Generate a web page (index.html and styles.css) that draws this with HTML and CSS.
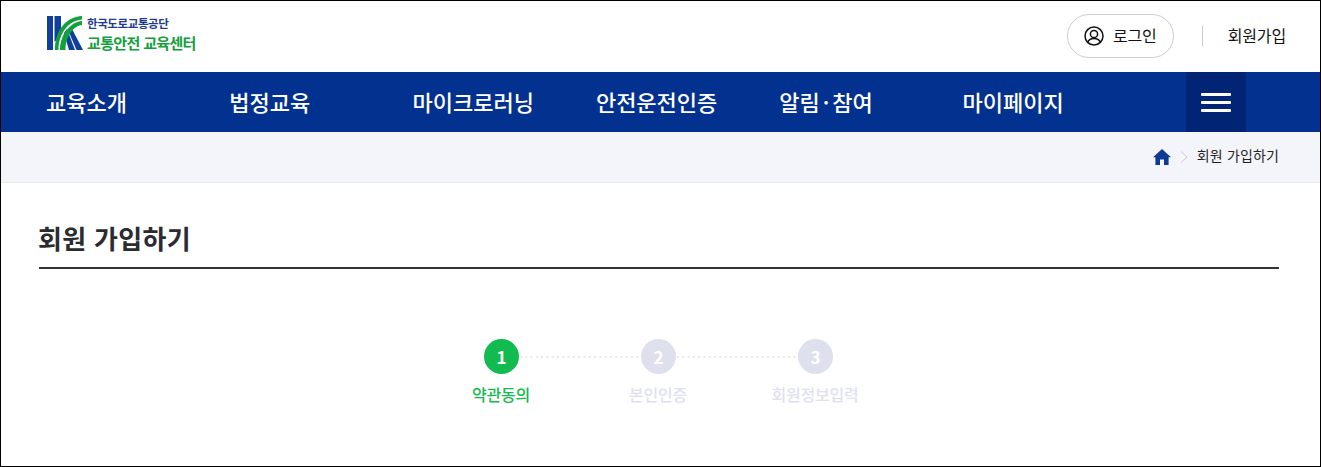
FILE: index.html
```html
<!DOCTYPE html>
<html lang="ko">
<head>
<meta charset="utf-8">
<title>회원 가입하기</title>
<link rel="stylesheet" href="styles.css">
</head>
<body>
<div class="page">
  <header class="top">
    <a class="logo">
      <svg class="logo-mark" width="36" height="35" viewBox="0 0 36 35">
        <path d="M0 0 L6 0 L6 34 L0 34 Z" fill="#0f3f9b"/>
        <path d="M7.5 0 L14 0 L14 20 L7.5 26 Z" fill="#0f3f9b"/>
        <path d="M17 17 L20 13 L28 34 L22 34 Z" fill="#0f3f9b"/>
        <path d="M21 14 L24 11 L36 34 L29.5 34 Z" fill="#0f3f9b"/>
        <path d="M8 34 C8 14 19 1 35 0 L35 3.5 C22 4.5 11.5 17 11.5 34 Z" fill="#12a03c"/>
        <path d="M13 34 C13 19 23 6 35 5 L35 9 C26 10 18.5 21 18.5 34 Z" fill="#12a03c"/>
      </svg>
      <span class="logo-text">
        <span class="logo-org">한국도로교통공단</span>
        <span class="logo-name">교통안전 교육센터</span>
      </span>
    </a>
    <div class="util">
      <a class="login">
        <svg width="20" height="20" viewBox="0 0 20 20" fill="none" stroke="#111" stroke-width="1.5">
          <circle cx="10" cy="10" r="9"/>
          <circle cx="10" cy="8" r="3.6"/>
          <path d="M3.8 16.2 C5 13.4 7.4 12.6 10 12.6 C12.6 12.6 15 13.4 16.2 16.2"/>
        </svg>
        <span class="login-text">로그인</span>
      </a>
      <span class="sep"></span>
      <a class="join">회원가입</a>
    </div>
  </header>
  <nav class="gnb">
    <ul class="gnb-list">
      <li>교육소개</li>
      <li>법정교육</li>
      <li>마이크로러닝</li>
      <li>안전운전인증</li>
      <li>알림<span class="dot">·</span>참여</li>
      <li>마이페이지</li>
    </ul>
    <button class="burger" aria-label="전체메뉴"><i></i><i></i><i></i></button>
  </nav>
  <div class="crumb">
    <svg width="18" height="16" viewBox="0 0 18 16">
      <path d="M9 0 L18 8.2 L15.6 8.2 L15.6 16 L11 16 L11 10.5 L7 10.5 L7 16 L2.4 16 L2.4 8.2 L0 8.2 Z" fill="#0f3a93"/>
    </svg>
    <svg width="8" height="12" viewBox="0 0 8 12" fill="none" stroke="#c9ccd4" stroke-width="1"><path d="M1 0.5 L7 6 L1 11.5"/></svg>
    <span>회원 가입하기</span>
  </div>
  <main class="content">
    <h1 class="title"><span class="title-text">회원 가입하기</span></h1>
    <ol class="steps">
      <li class="step on"><span class="num">1</span><span class="label">약관동의</span></li>
      <li class="step"><span class="num">2</span><span class="label">본인인증</span></li>
      <li class="step"><span class="num">3</span><span class="label">회원정보입력</span></li>
    </ol>
  </main>
</div>
</body>
</html>
```
FILE: styles.css
```css
* { box-sizing: border-box; }
html, body { margin: 0; padding: 0; }
body {
  font-family: "Noto Sans CJK KR", "Noto Sans", sans-serif;
  color: #111;
  background: #fff;
  overflow: hidden;
}
ul, ol { list-style: none; margin: 0; padding: 0; }
.page {
  width: 1321px;
  height: 467px;
  border: 1px solid #000;
  overflow: hidden;
}
.top {
  height: 71px;
  display: flex;
  align-items: center;
  justify-content: space-between;
  padding: 0 34px 2px 46px;
}
.logo { display: flex; align-items: center; gap: 4px; margin-top: -5px; }
.logo-mark { display: block; }
.logo-text { display: flex; flex-direction: column; gap: 4px; padding-top: 2px; margin-top: -1px; }
.logo-org { font-size: 11.5px; line-height: 14px; font-weight: 700; color: #1f3d8f; letter-spacing: -0.4px; }
.logo-name { font-size: 15px; line-height: 18px; font-weight: 700; color: #12a03c; letter-spacing: -0.65px; }
.util { display: flex; align-items: center; }
.login {
  width: 107px;
  height: 44px;
  border: 1px solid #ccc;
  border-radius: 22px;
  display: flex;
  align-items: center;
  justify-content: center;
  gap: 9px;
  font-size: 16px;
  letter-spacing: -0.3px;
}
.login-text { margin-top: -2px; }
.sep { width: 1px; height: 20px; background: #ccc; margin: 0 25px 0 28px; }
.join { font-size: 16px; line-height: 20px; letter-spacing: -0.15px; margin-top: -2px; }
.gnb {
  height: 60px;
  background: #03318f;
  display: flex;
  padding-left: 45px;
}
.gnb-list { display: flex; width: 1140px; }
.gnb-list li {
  flex: 0 0 183.3px;
  font-size: 22px;
  font-weight: 500;
  line-height: 58px;
  color: #fff;
}
.dot { margin: 0 3px; }
.burger {
  width: 60px;
  height: 60px;
  border: 0;
  padding: 0;
  background: #012574;
  display: flex;
  flex-direction: column;
  align-items: center;
  justify-content: center;
  gap: 5px;
}
.burger i { display: block; width: 30px; height: 3px; border-radius: 1px; background: #fff; }
.crumb {
  height: 51px;
  background: #f4f5fa;
  border-bottom: 1px solid #e8e8ea;
  display: flex;
  align-items: center;
  justify-content: flex-end;
  gap: 9px;
  padding-right: 41px;
  font-size: 14px;
  letter-spacing: 0.15px;
  color: #222;
}
.crumb span { margin-top: -4px; }
.content { padding: 0 41px 0 38px; }
.title {
  margin: 0;
  height: 86px;
  padding-top: 36px;
  font-size: 26px;
  line-height: 38px;
  font-weight: 700;
  color: #2a2c30;
  border-bottom: 2px solid #333;
  letter-spacing: 0.3px;
}
.title-text { margin-left: -1px; }
.steps { display: flex; justify-content: center; margin-top: 70px; padding-right: 2px; }
.step {
  width: 157px;
  display: flex;
  flex-direction: column;
  align-items: center;
  position: relative;
}
.step + .step::before {
  content: "";
  position: absolute;
  top: 17px;
  left: -60px;
  width: 120px;
  height: 2px;
  background: linear-gradient(to right, #e4e5ee 2px, transparent 2px) 0 0 / 5.3px 2px repeat-x;
}
.num {
  width: 35px;
  height: 35px;
  border-radius: 50%;
  background: #dfe0ed;
  color: #fff;
  font-size: 17px;
  font-weight: 700;
  line-height: 35px;
  text-align: center;
  padding-left: 1px;
}
.label {
  margin-top: 9px;
  font-size: 16px;
  line-height: 22px;
  font-weight: 500;
  color: #e0e1ee;
  letter-spacing: -0.2px;
}
.on .num { background: #12bb4f; }
.on .label { color: #12bb4f; }
```
